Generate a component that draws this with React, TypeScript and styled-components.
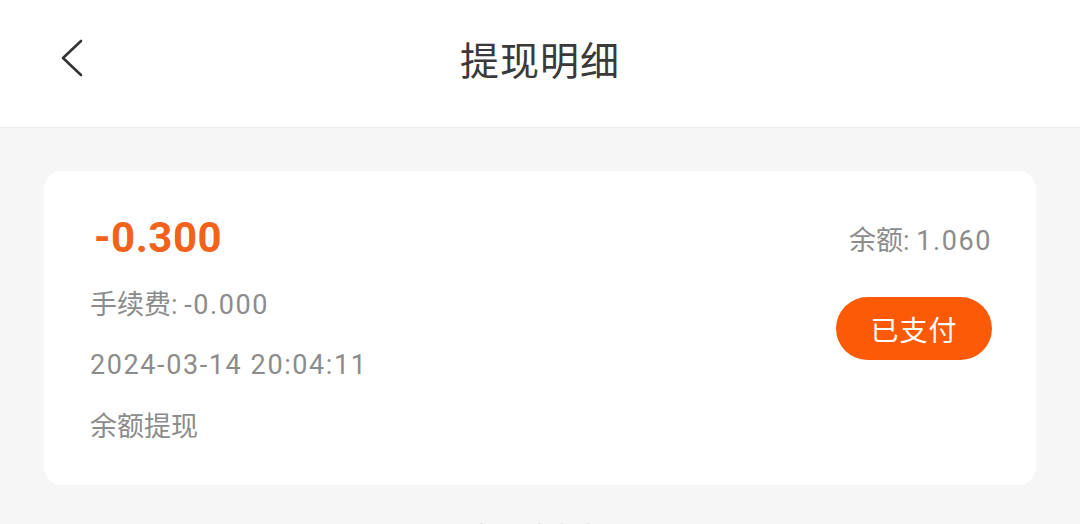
import React from "react";
import styled, { createGlobalStyle } from "styled-components";

const GlobalStyle = createGlobalStyle`
  html, body {
    margin: 0;
    padding: 0;
    background: #f6f6f6;
    font-family: Roboto, "Noto Sans CJK SC", sans-serif;
  }
`;

const Page = styled.div`
  width: 1080px;
  min-height: 524px;
  background: #f6f6f6;
  overflow: hidden;
`;

const Header = styled.header`
  height: 128px;
  background: #fff;
  border-bottom: 1px solid #ececec;
  display: grid;
  grid-template-columns: 120px 1fr 120px;
  align-items: center;
  box-sizing: border-box;
`;

const BackButton = styled.button`
  border: none;
  background: transparent;
  padding: 0;
  margin-left: 56px;
  margin-top: -12px;
  width: 32px;
  height: 40px;
  display: flex;
  align-items: center;
  justify-content: center;
  svg {
    width: 30px;
    height: 40px;
  }
`;

const Title = styled.h1`
  margin: -12px 0 0;
  text-align: center;
  font-size: 39px;
  font-weight: 400;
  color: #3a3a3a;
  letter-spacing: 1px;
`;

const Card = styled.section`
  margin: 43px 44px 0;
  height: 314px;
  background: #fff;
  border-radius: 18px;
  padding: 37px 44px 0 46px;
  box-sizing: border-box;
  display: flex;
  justify-content: space-between;
  align-items: flex-start;
`;

const InfoColumn = styled.div`
  display: flex;
  flex-direction: column;
`;

const Amount = styled.div`
  font-size: 42px;
  font-weight: 700;
  color: #f2621a;
  line-height: 60px;
  padding-left: 4px;
  margin-bottom: 7px;
  letter-spacing: 0.5px;
`;

const InfoLine = styled.div<{ $gap?: number }>`
  font-size: 27px;
  color: #8c8c8c;
  line-height: 60px;
  margin-top: ${(p) => p.$gap ?? 0}px;
`;

const Num = styled.span`
  letter-spacing: 1.6px;
`;

const SideColumn = styled.div`
  display: flex;
  flex-direction: column;
  align-items: flex-end;
  padding-top: 3px;
`;

const Balance = styled.div`
  font-size: 27px;
  color: #8c8c8c;
  line-height: 60px;
`;

const StatusPill = styled.div`
  margin-top: 26px;
  width: 156px;
  height: 63px;
  border-radius: 32px;
  background: #fc5a06;
  color: #fff;
  font-size: 28px;
  display: flex;
  align-items: center;
  justify-content: center;
  letter-spacing: 1px;
`;

const Footer = styled.div`
  margin-top: 40px;
  text-align: center;
  font-size: 28px;
  line-height: 28px;
  color: #999;
`;

export default function App() {
  return (
    <Page>
      <GlobalStyle />
      <Header>
        <BackButton aria-label="返回">
          <svg viewBox="0 0 30 40" fill="none">
            <path
              d="M24 3 L6 20 L24 37"
              stroke="#333"
              strokeWidth="2.6"
              strokeLinecap="round"
              strokeLinejoin="round"
            />
          </svg>
        </BackButton>
        <Title>提现明细</Title>
        <div />
      </Header>
      <Card>
        <InfoColumn>
          <Amount>-0.300</Amount>
          <InfoLine>
            手续费: <Num>-0.000</Num>
          </InfoLine>
          <InfoLine>
            <Num>2024-03-14 20:04:11</Num>
          </InfoLine>
          <InfoLine $gap={2}>余额提现</InfoLine>
        </InfoColumn>
        <SideColumn>
          <Balance>
            余额: <Num>1.060</Num>
          </Balance>
          <StatusPill>已支付</StatusPill>
        </SideColumn>
      </Card>
      <Footer>没有更多数据了</Footer>
    </Page>
  );
}
